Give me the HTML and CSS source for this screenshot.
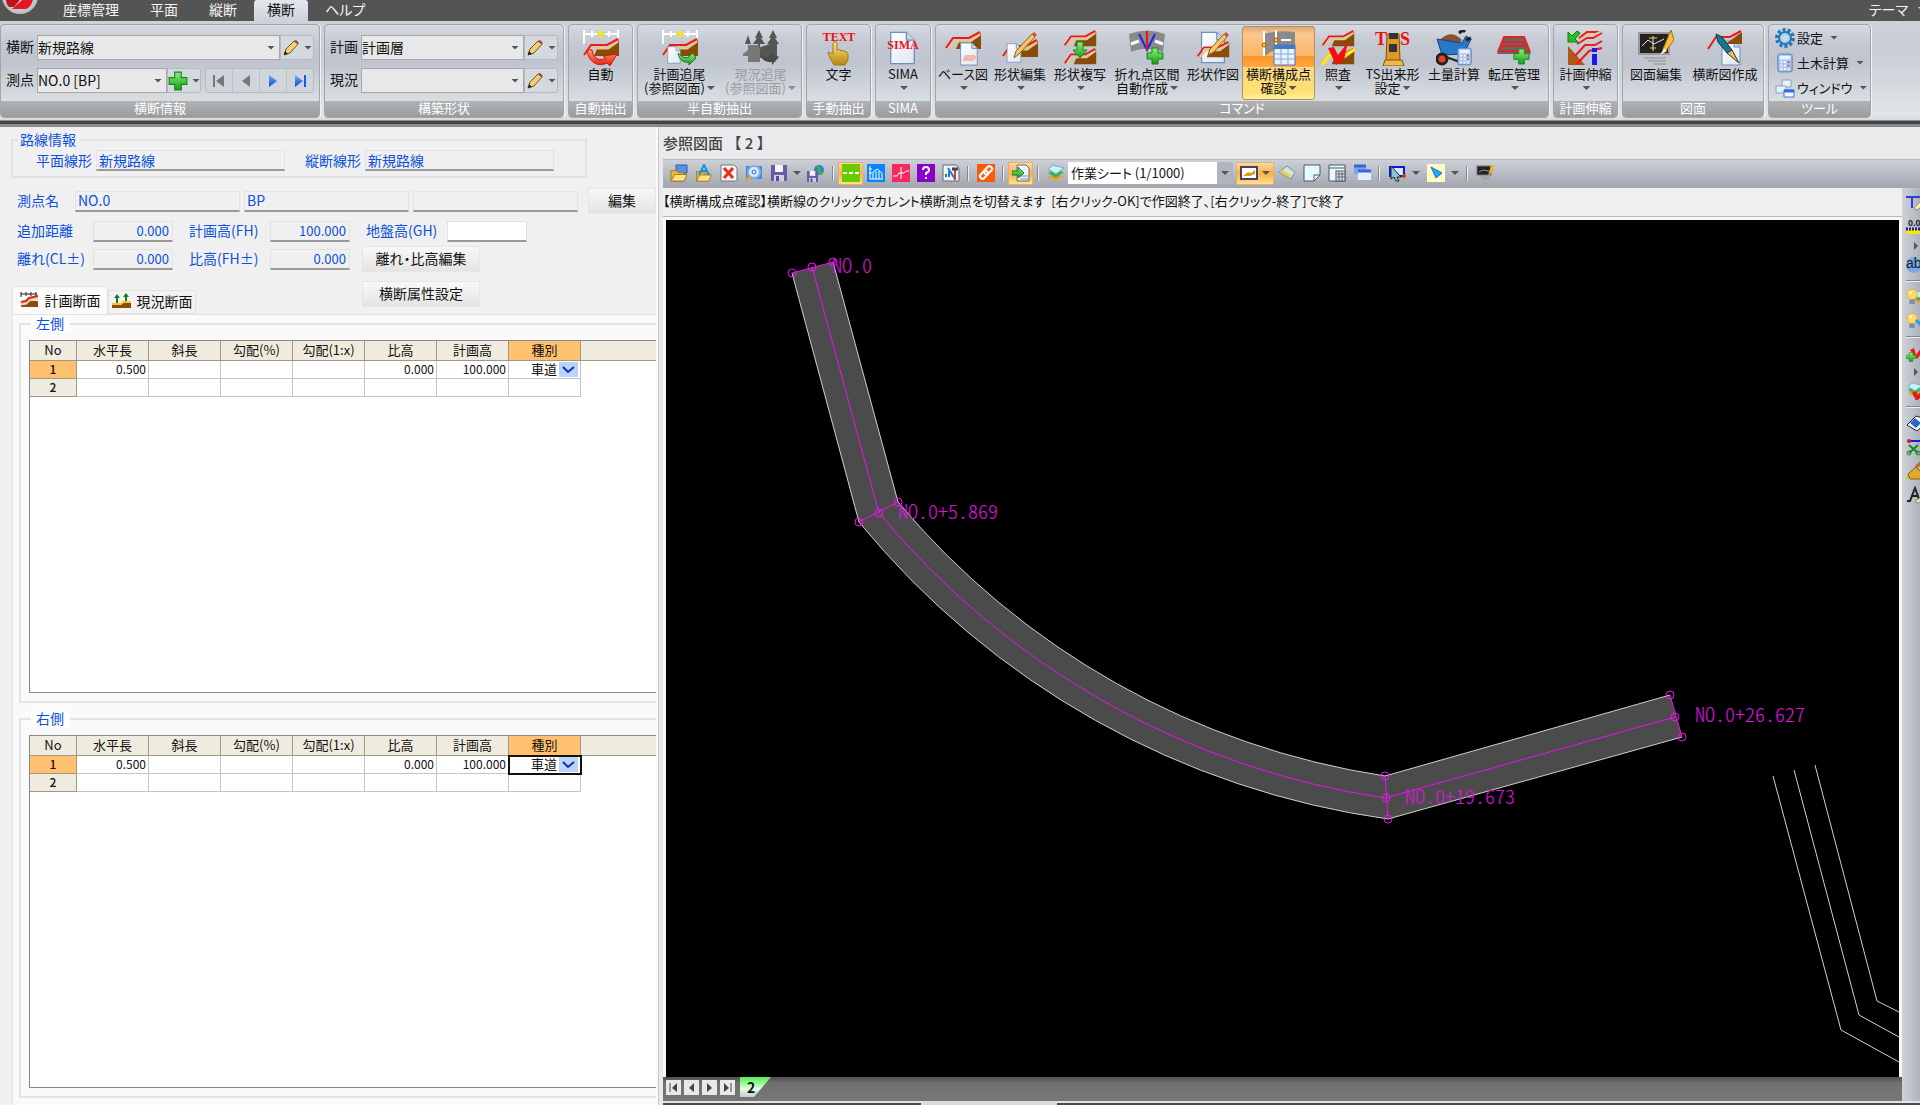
FILE: index.html
```html
<!DOCTYPE html>
<html lang="ja">
<head>
<meta charset="utf-8">
<title>横断 - 参照図面</title>
<link rel="stylesheet" href="styles.css">
</head>
<body>
<svg class="defs" width="0" height="0" aria-hidden="true">
  <defs>
    <linearGradient id="g-red" x1="0" y1="0" x2="0" y2="1"><stop offset="0" stop-color="#ff9a80"/><stop offset="1" stop-color="#e81c08"/></linearGradient>
    <linearGradient id="g-green" x1="0" y1="0" x2="0" y2="1"><stop offset="0" stop-color="#8cf07c"/><stop offset="1" stop-color="#1c9a1c"/></linearGradient>
    <linearGradient id="g-blue" x1="0" y1="0" x2="0" y2="1"><stop offset="0" stop-color="#6fb0ff"/><stop offset="1" stop-color="#0a48d0"/></linearGradient>
    <linearGradient id="g-gold" x1="0" y1="0" x2="0" y2="1"><stop offset="0" stop-color="#ffe98a"/><stop offset="1" stop-color="#b8860b"/></linearGradient>
    <linearGradient id="g-page" x1="0" y1="0" x2="1" y2="1"><stop offset="0" stop-color="#ffffff"/><stop offset="1" stop-color="#dce6f2"/></linearGradient>
    <radialGradient id="g-ball"><stop offset="0" stop-color="#ffffff"/><stop offset="1" stop-color="#b8bcc0"/></radialGradient>
  </defs>
  <symbol id="sec" viewBox="0 0 36 20"><path d="M11 18 14 11H26L36 2V18Z" fill="#8a4a08"/><path d="M3 18 10 10H25L35 3" fill="none" stroke="#ddc99a" stroke-width="3"/><path d="M1 17 8 7H24L35 1" fill="none" stroke="#f01818" stroke-width="2"/></symbol>
  <symbol id="ruler" viewBox="0 0 36 14"><path d="M1 0V14M1 4H35M9 1V7M26 1V7M35 0V8" fill="none" stroke="#fff" stroke-width="2"/><path d="M14 4H22M18 0V8" stroke="#ffe600" stroke-width="2"/></symbol>
  <symbol id="page" viewBox="0 0 20 26"><path d="M1 1H13L19 7V25H1Z" fill="url(#g-page)" stroke="#6f8fb8"/><path d="M13 1V7H19" fill="#c8d8ec" stroke="#6f8fb8"/></symbol>
  <symbol id="plus" viewBox="0 0 18 18"><path d="M6 1H12V6H17V12H12V17H6V12H1V6H6Z" fill="url(#g-green)" stroke="#0f8a1a"/></symbol>
  <symbol id="pencil" viewBox="0 0 18 18"><path d="M2 16 4 10 12 2 16 5 8 14Z" fill="#f3cf72" stroke="#6a5430"/><path d="M12 2 14 1 17 4 16 5Z" fill="#c03028"/><path d="M2 16 3 12 6 15Z" fill="#222"/></symbol>
  <symbol id="calc" viewBox="0 0 18 22"><rect x="1" y="1" width="16" height="20" rx="2" fill="#a8c8f0" stroke="#4a74b0"/><rect x="3" y="3" width="12" height="4" fill="#eaf4ff"/><path d="M4 10H14M4 14H14M4 18H14" stroke="#fff" stroke-width="2" stroke-dasharray="2 2"/><path d="M12 10h2M12 14h2" stroke="#e02020" stroke-width="2"/></symbol>
  <symbol id="swoosh-g" viewBox="0 0 20 14"><path d="M1 2C2 9 7 12 12 11V14L19 7 16 2 13 4 12 6C8 8 5 6 1 2Z" fill="url(#g-green)" stroke="#117a17"/></symbol>
  <symbol id="folder" viewBox="0 0 18 16"><path d="M1 15V4H7L9 6H15V15Z" fill="#e8b840" stroke="#a87818"/><path d="M1 15 5 8H18L15 15Z" fill="#ffe08a" stroke="#a87818"/></symbol>
  <symbol id="floppy" viewBox="0 0 16 16"><path d="M0 0H16V16H0Z" fill="#6a5aa8"/><rect x="4" width="8" height="7" fill="#f4f4fa"/><rect x="3" y="10" width="10" height="6" fill="#d4d0e8"/><rect x="5" y="11" width="3" height="5" fill="#5a4a98"/></symbol>
  <symbol id="layers" viewBox="0 0 18 18"><path d="M1 13 6 9 17 12 9 17Z" fill="#f0a030"/><path d="M1 9 6 6 17 8 9 14Z" fill="#48b048"/><path d="M1 5 6 1 17 4 9 10Z" fill="#c8f0f8" stroke="#68b0c8"/></symbol>
  <symbol id="bulb" viewBox="0 0 16 18"><circle cx="7" cy="6" r="6" fill="#ffd868" stroke="#e0a840"/><circle cx="5" cy="4" r="2" fill="#fff4c8"/><rect x="4" y="12" width="6" height="5" fill="#7890a8"/></symbol>
</svg>

<header class="app-top">
  <nav class="menu">
    <svg class="logo" viewBox="0 0 40 16"><circle cx="20" cy="-4" r="18" fill="url(#g-ball)"/><path d="M6 0H20L14 7H9Q6 4 6 0Z" fill="#c41018"/><path d="M22 0H33Q31 7 26 9H12Z" fill="#e01820"/></svg>
    <a href="#" class="m1">座標管理</a><a href="#">平面</a><a href="#">縦断</a><a href="#" class="on" aria-current="page">横断</a><a href="#">ヘルプ</a>
    <a href="#" class="theme">テーマ<i class="caret"></i></a>
  </nav>

  <div class="ribbon">
    <section class="grp g-info">
      <div class="fields">
        <div class="line">
          <label for="oudan">横断</label>
          <span class="combo wide"><select id="oudan"><option>新規路線</option></select><i class="caret"></i></span>
          <button class="tool" aria-label="横断を編集"><svg width="18" height="18"><use href="#pencil"/></svg><i class="caret"></i></button>
        </div>
        <div class="line">
          <label for="sokuten">測点</label>
          <span class="combo"><select id="sokuten"><option>NO.0 [BP]</option></select><i class="caret"></i></span>
          <button class="tool" aria-label="測点を追加"><svg width="20" height="20"><use href="#plus"/></svg><i class="caret"></i></button>
          <span class="steps">
            <button aria-label="先頭"><svg width="14" height="14"><path d="M2 1V13" stroke="#777" stroke-width="2"/><path d="M12 1V13L4 7Z" fill="#777"/></svg></button>
            <button aria-label="前"><svg width="14" height="14"><path d="M11 1V13L3 7Z" fill="#777"/></svg></button>
            <button aria-label="次"><svg width="14" height="14"><path d="M3 1V13L11 7Z" fill="url(#g-blue)"/></svg></button>
            <button aria-label="末尾"><svg width="14" height="14"><path d="M12 1V13" stroke="#1a5ce0" stroke-width="2"/><path d="M2 1V13L10 7Z" fill="url(#g-blue)"/></svg></button>
          </span>
        </div>
      </div>
      <h2>横断情報</h2>
    </section>

    <section class="grp g-shape">
      <div class="fields">
        <div class="line">
          <label for="keikaku">計画</label>
          <span class="combo wide"><select id="keikaku"><option>計画層</option></select><i class="caret"></i></span>
          <button class="tool" aria-label="計画を編集"><svg width="18" height="18"><use href="#pencil"/></svg><i class="caret"></i></button>
        </div>
        <div class="line">
          <label for="genkyo">現況</label>
          <span class="combo wide"><select id="genkyo"><option></option></select><i class="caret"></i></span>
          <button class="tool" aria-label="現況を編集"><svg width="18" height="18"><use href="#pencil"/></svg><i class="caret"></i></button>
        </div>
      </div>
      <h2>構築形状</h2>
    </section>

    <section class="grp g-auto">
      <div class="items">
        <button class="big"><svg viewBox="0 0 36 36"><use href="#ruler" width="36" height="14"/><use href="#sec" y="8" width="36" height="20"/><path d="M4 20C5 31 14 38 24 33L27 36 34 24 20 26 23 28C16 32 10 28 9 20Z" fill="url(#g-red)" stroke="#d01808"/></svg><span>自動</span></button>
      </div>
      <h2>自動抽出</h2>
    </section>

    <section class="grp g-semi">
      <div class="items">
        <button class="big"><svg viewBox="0 0 36 36"><use href="#ruler" width="36" height="14"/><use href="#sec" y="8" width="36" height="20"/><use href="#page" x="5" y="16" width="14" height="18"/><use href="#swoosh-g" x="15" y="21" width="20" height="14"/></svg><span>計画追尾<br>(参照図面)<i class="caret"></i></span></button>
        <button class="big off" disabled><svg viewBox="0 0 36 36" fill="#555"><path d="M16 0 20 8H18L22 14H17V19H15V14H10L14 8H12ZM30 0 34 8H32L36 14H31V19H29V14H24L28 8H26ZM5 5 8 14H2Z"/><path d="M14 18 34 12V28H14Z"/><path d="M5 15H14L17 18V32H5ZM0 24 5 20V26H0Z" fill="#777"/><path d="M16 22C20 28 24 28 27 26V23L36 27 29 35V32C22 33 18 29 16 22Z" fill="#4a4a4a"/></svg><span>現況追尾<br>(参照図面)<i class="caret"></i></span></button>
      </div>
      <h2>半自動抽出</h2>
    </section>

    <section class="grp g-auto">
      <div class="items">
        <button class="big"><svg viewBox="0 0 36 36"><text x="18" y="11" class="ico-text">TEXT</text><path d="M13 35 8 26 7 22 12 24V13Q14 10 16 13V20Q19 18 20 21 23 19 24 22 27 21 27 25V30L24 35Z" fill="url(#g-gold)" stroke="#a07818"/></svg><span>文字</span></button>
      </div>
      <h2>手動抽出</h2>
    </section>

    <section class="grp g-sima">
      <div class="items">
        <button class="big"><svg viewBox="0 0 36 36"><use href="#page" x="4" y="1" width="27" height="34"/><text x="18" y="19" class="ico-text">SIMA</text></svg><span>SIMA<br><i class="caret"></i></span></button>
      </div>
      <h2>SIMA</h2>
    </section>

    <section class="grp g-cmd">
      <div class="items">
        <button class="big"><svg viewBox="0 0 36 36"><use href="#sec" y="1" width="36" height="20"/><use href="#page" x="14" y="12" width="20" height="24"/><path d="M17 31 20 25H30L32 28 28 31Z" fill="#f0b8b0"/></svg><span>ベース図<br><i class="caret"></i></span></button>
        <button class="big"><svg viewBox="0 0 36 36"><use href="#sec" y="9" width="36" height="20"/><use href="#page" x="4" y="13" width="16" height="20"/><path d="M12 28 14 21 30 4 33 7 17 24Z" fill="#f3c860" stroke="#8a6420"/><path d="M30 4 32 2 35 5 33 7Z" fill="#d84848"/></svg><span>形状編集<br><i class="caret"></i></span></button>
        <button class="big"><svg viewBox="0 0 36 36"><use href="#sec" width="36" height="18"/><use href="#sec" y="18" width="36" height="18"/><path d="M15 12H21V20H25L18 28 11 20H15Z" fill="url(#g-green)" stroke="#129018"/></svg><span>形状複写<br><i class="caret"></i></span></button>
        <button class="big"><svg viewBox="0 0 36 36"><path d="M0 4Q18-3 36 4L34 22Q18 15 2 22Z" fill="#8a8a8a"/><path d="M2 14 10 11M26 11 34 14" stroke="#fff" stroke-width="3"/><path d="M10 4 18 20 26 4" fill="none" stroke="#1c28e8" stroke-width="2"/><path d="M18 1V20" stroke="#e81818" stroke-width="2"/><use href="#plus" x="17" y="17" width="18" height="18"/></svg><span>折れ点区間<br>自動作成<i class="caret"></i></span></button>
        <button class="big"><svg viewBox="0 0 36 36"><use href="#page" x="5" y="1" width="26" height="33"/><use href="#sec" y="11" width="36" height="18"/><path d="M13 25 15 19 29 4 32 7 19 22Z" fill="#f3c860" stroke="#8a6420"/><path d="M29 4 31 2 34 5 32 7Z" fill="#d84848"/></svg><span>形状作図</span></button>
        <button class="big on"><svg viewBox="0 0 36 36"><path d="M2 4Q18 0 34 2V20Q18 14 4 26Z" fill="#8a8a8a"/><path d="M3 1V26M15 0V20" stroke="#fff" stroke-width="2"/><path d="M20 10H30" stroke="#fff" stroke-width="2"/><circle cx="3" cy="15" r="2" fill="#ffe600" stroke="#c03818"/><circle cx="15" cy="10" r="2" fill="#ffe600" stroke="#c03818"/><rect x="13" y="15" width="21" height="20" fill="#e8f2ff" stroke="#4878c0"/><path d="M13 17H34" stroke="#4878c0" stroke-width="4"/><path d="M13 24H34M13 29H34M20 19V35M27 19V35" stroke="#88a8d8"/></svg><span>横断構成点<br>確認<i class="caret"></i></span></button>
        <button class="big"><svg viewBox="0 0 36 36"><use href="#sec" width="36" height="18"/><use href="#sec" y="18" width="36" height="18"/><path d="M2 35 9 25H25L35 19" fill="none" stroke="#ffee00" stroke-width="3"/><path d="M8 18 14 17 18 25 28 12 24 30 16 35Z" fill="#f01010"/></svg><span>照査<br><i class="caret"></i></span></button>
        <button class="big"><svg viewBox="0 0 36 36"><path d="M12 4H24L25 32H11Z" fill="#e09828" stroke="#805010"/><path d="M14 3H23V9H14ZM14 14H22V22H14Z" fill="#333"/><path d="M10 30H27L29 36H8Z" fill="#f0b848" stroke="#805010"/><text x="6" y="15" class="ico-text big-t">T</text><text x="30" y="15" class="ico-text big-t">S</text></svg><span>TS出来形<br>設定<i class="caret"></i></span></button>
        <button class="big"><svg viewBox="0 0 36 36"><path d="M3 11Q14-2 26 10L22 15H5Z" fill="#8a5030"/><path d="M1 9 26 13 30 6 35 9 28 24 6 25Z" fill="#2878c8" stroke="#104880"/><path d="M23 3 27 0 29 2M30 10 35 8" fill="none" stroke="#222" stroke-width="3"/><circle cx="6" cy="29" r="5" fill="#e84020" stroke="#222" stroke-width="3"/><path d="M10 27 24 32" stroke="#222" stroke-width="2"/><use href="#calc" x="21" y="17" width="15" height="19"/></svg><span>土量計算</span></button>
        <button class="big"><svg viewBox="0 0 36 36"><path d="M7 8H28L35 24H1Z" fill="#666"/><path d="M2 22 8 7H28L34 22" fill="none" stroke="#e82020" stroke-width="2"/><path d="M7 12H29M5 16H31M4 21H33" stroke="#e82020" stroke-width="2"/><use href="#plus" x="17" y="18" width="17" height="17"/></svg><span>転圧管理<br><i class="caret"></i></span></button>
      </div>
      <h2>コマンド</h2>
    </section>

    <section class="grp g-auto">
      <div class="items">
        <button class="big"><svg viewBox="0 0 36 36"><path d="M12 8 20 2H35M10 14 20 8H26L35 3" fill="none" stroke="#f01818" stroke-width="2"/><path d="M12 11 20 5H27L35 1" fill="none" stroke="#ddc99a" stroke-width="2"/><path d="M1 16 18 35H1Z" fill="#b05818"/><path d="M10 34 22 21 35 18M8 26 18 15H28L35 11" fill="none" stroke="#f01818" stroke-width="2"/><path d="M1 2V12H11L8 9 13 3 10 1 5 6Z" fill="#20c020" stroke="#107a10"/><path d="M25 24H30V35H25ZM25 18H30V22H25Z" fill="#1818f0"/></svg><span>計画伸縮<br><i class="caret"></i></span></button>
      </div>
      <h2>計画伸縮</h2>
    </section>

    <section class="grp g-draw">
      <div class="items">
        <button class="big"><svg viewBox="0 0 36 36"><rect x="1" y="3" width="30" height="21" fill="#222" stroke="#999" stroke-width="2"/><path d="M4 16 10 10 16 14 26 9M15 6V21" fill="none" stroke="#e8e8e8"/><path d="M11 8H19M12 18H18" stroke="#e8e000"/><path d="M6 28H28M10 31H28M16 34H28" stroke="#aaa" stroke-width="2"/><path d="M33 0 36 10 27 22 25 19Z" fill="#f8c040" stroke="#a06818"/><path d="M26 18 29 21 22 25Z" fill="#fff0c0"/></svg><span>図面編集</span></button>
        <button class="big"><svg viewBox="0 0 36 36"><use href="#page" x="13" y="10" width="22" height="26"/><path d="M18 14H35V2L24 10Z" fill="#8a4a08"/><path d="M1 19 9 7H23L34 1" fill="none" stroke="#f01818" stroke-width="2"/><path d="M9 4 15 7 25 20 20 23 11 12Z" fill="#187890" stroke="#0a3848"/><path d="M20 23 25 20 32 33Z" fill="#e8c060" stroke="#333"/></svg><span>横断図作成</span></button>
      </div>
      <h2>図面</h2>
    </section>

    <section class="grp g-tool">
      <div class="items small">
        <button><svg viewBox="0 0 20 20"><circle cx="10" cy="10" r="8" fill="none" stroke="#2878b8" stroke-width="4" stroke-dasharray="3 2"/><circle cx="10" cy="10" r="6" fill="#9fd8f4" stroke="#2878b8" stroke-width="2"/><circle cx="10" cy="10" r="3" fill="#d4d8dc"/></svg>設定<i class="caret"></i></button>
        <button><svg viewBox="0 0 20 20"><use href="#calc" x="2" width="16" height="20"/></svg>土木計算<i class="caret"></i></button>
        <button><svg viewBox="0 0 20 20"><path d="M7 2H16V9H7Z" fill="#e8f0fa" stroke="#88a0c0"/><path d="M1 8H11V15H1Z" fill="#e8f0fa" stroke="#88a0c0"/><path d="M9 12H19V19H9Z" fill="#f4f8ff" stroke="#4078d0"/><path d="M9 13H19" stroke="#3070e0" stroke-width="3"/></svg>ウィンドウ<i class="caret"></i></button>
      </div>
      <h2>ツール</h2>
    </section>
  </div>
</header>

<main class="work">
  <form class="side">
    <fieldset class="route">
      <legend>路線情報</legend>
      <label for="hei">平面線形</label><input id="hei" readonly value="新規路線">
      <label for="juu">縦断線形</label><input id="juu" readonly value="新規路線">
    </fieldset>

    <div class="names">
      <label for="n1">測点名</label>
      <input id="n1" readonly value="NO.0"><input readonly value="BP" aria-label="測点名 2"><input readonly aria-label="測点名 3">
      <button type="button">編集</button>
    </div>

    <div class="nums">
      <label for="k1">追加距離</label><input id="k1" readonly value="0.000">
      <label for="k2">計画高(FH)</label><input id="k2" readonly value="100.000">
      <label for="k3">地盤高(GH)</label><input id="k3" class="edit">
      <label for="k4">離れ(CL±)</label><input id="k4" readonly value="0.000">
      <label for="k5">比高(FH±)</label><input id="k5" readonly value="0.000">
      <button type="button">離れ・比高編集</button>
    </div>

    <div class="tabrow">
      <div class="tabs" role="tablist">
        <button type="button" role="tab" class="on" aria-selected="true"><svg viewBox="0 0 20 16"><path d="M1 0V5M1 2H17M6 0V4M11 0V4M16 0V4" fill="none" stroke="#222"/><path d="M1 15V12L8 9H18V15Z" fill="#8a4a10"/><path d="M1 12 6 11 9 8 18 6" fill="none" stroke="#e8d8a8" stroke-width="3"/><path d="M1 10 6 9 9 6 18 4" fill="none" stroke="#e02020" stroke-width="2"/></svg>計画断面</button>
        <button type="button" role="tab" aria-selected="false"><svg viewBox="0 0 20 16"><path d="M5 1 8 5H6V11H4V5H2ZM14 0 17 4H15V9H13V4H11Z" fill="#108018"/><path d="M0 11H9L11 10H19V15H0Z" fill="#8a4a10"/><path d="M0 11H9L11 9H19" fill="none" stroke="#f0c838" stroke-width="2"/></svg>現況断面</button>
      </div>
      <button type="button" class="attr">横断属性設定</button>
    </div>

    <div class="page">
      <fieldset class="gridset">
        <legend>左側</legend>
        <div class="sheet">
          <table>
            <colgroup><col class="c-no"><col span="7" class="c"><col></colgroup>
            <thead><tr><th>No</th><th>水平長</th><th>斜長</th><th>勾配(%)</th><th>勾配(1:x)</th><th>比高</th><th>計画高</th><th class="hot">種別</th><th class="rest"></th></tr></thead>
            <tbody>
              <tr><th class="hot">1</th><td>0.500</td><td></td><td></td><td></td><td>0.000</td><td>100.000</td><td class="kind"><span class="pick"><select aria-label="左側 種別"><option>車道</option></select><svg viewBox="0 0 19 15"><path d="M4 5 9 10 15 5" fill="none" stroke="#1030a8" stroke-width="2"/></svg></span></td><td class="rest"></td></tr>
              <tr><th>2</th><td></td><td></td><td></td><td></td><td></td><td></td><td></td><td class="rest"></td></tr>
            </tbody>
          </table>
        </div>
      </fieldset>
      <fieldset class="gridset">
        <legend>右側</legend>
        <div class="sheet">
          <table>
            <colgroup><col class="c-no"><col span="7" class="c"><col></colgroup>
            <thead><tr><th>No</th><th>水平長</th><th>斜長</th><th>勾配(%)</th><th>勾配(1:x)</th><th>比高</th><th>計画高</th><th class="hot">種別</th><th class="rest"></th></tr></thead>
            <tbody>
              <tr><th class="hot">1</th><td>0.500</td><td></td><td></td><td></td><td>0.000</td><td>100.000</td><td class="kind cur"><span class="pick"><select aria-label="右側 種別"><option>車道</option></select><svg viewBox="0 0 19 15"><path d="M4 5 9 10 15 5" fill="none" stroke="#1030a8" stroke-width="2"/></svg></span></td><td class="rest"></td></tr>
              <tr><th>2</th><td></td><td></td><td></td><td></td><td></td><td></td><td></td><td class="rest"></td></tr>
            </tbody>
          </table>
        </div>
      </fieldset>
    </div>
  </form>

  <section class="view">
    <h1>参照図面 【 2 】</h1>
    <div class="bar">
      <button aria-label="開く"><svg viewBox="0 0 18 18"><path d="M6 1H17V9H6Z" fill="#5b8fe0" stroke="#2c5cb0"/><use href="#folder" y="3" width="17" height="15"/></svg></button>
      <button aria-label="文字を開く"><svg viewBox="0 0 18 18"><use href="#folder" y="4" width="17" height="14"/><path d="M4 11 9 1 14 11M6 7H12" fill="none" stroke="#1890d8" stroke-width="2"/></svg></button>
      <button aria-label="閉じる"><svg viewBox="0 0 18 18"><path d="M1 1H14L17 4V17H1Z" fill="#f4f6f8" stroke="#778"/><path d="M4 4 13 14M13 4 4 14" stroke="#e83018" stroke-width="3"/></svg></button>
      <button aria-label="検索"><svg viewBox="0 0 18 18"><rect x="1" y="2" width="16" height="13" fill="#4888e8"/><circle cx="9" cy="8" r="6" fill="#d8ecff" stroke="#88b0d8" stroke-width="2"/><circle cx="9" cy="8" r="2" fill="none" stroke="#3068d0"/><path d="M1 17 5 13" stroke="#e8a820" stroke-width="3"/></svg></button>
      <button aria-label="保存"><svg viewBox="0 0 18 18"><use href="#floppy" x="1" y="1" width="16" height="16"/></svg></button>
      <i class="caret"></i>
      <button aria-label="共有保存"><svg viewBox="0 0 18 18"><circle cx="12" cy="6" r="5" fill="#3878d8"/><path d="M10 2Q14 5 11 8L16 9" fill="none" stroke="#30b848" stroke-width="3"/><use href="#floppy" y="7" width="11" height="11"/></svg></button>
      <i class="sep"></i>
      <button class="on" aria-label="平面"><svg viewBox="0 0 18 18"><rect width="18" height="18" fill="#66cc00"/><path d="M1 9H17" stroke="#fff" stroke-width="2" stroke-dasharray="4 2"/></svg></button>
      <button aria-label="縦断"><svg viewBox="0 0 18 18"><rect width="18" height="18" fill="#0a84ff"/><path d="M3 2V15H16M6 15V8L10 5 15 9V15M9 15V7M12 15V7M2 5H5M2 9H5" fill="none" stroke="#fff"/></svg></button>
      <button aria-label="横断"><svg viewBox="0 0 18 18"><rect width="18" height="18" fill="#f8285a"/><path d="M1 12H5L7 9H12L14 7H17M9 3V15" fill="none" stroke="#fff"/></svg></button>
      <button aria-label="ヘルプ"><svg viewBox="0 0 18 18"><rect width="18" height="18" fill="#8a00c8"/><path d="M6 6Q6 3 9 3T12 6Q12 8 9 9V11M9 13V15" fill="none" stroke="#fff" stroke-width="2"/></svg></button>
      <button aria-label="設定"><svg viewBox="0 0 18 18"><path d="M1 1H14L17 4V17H1Z" fill="#eef2f6" stroke="#667"/><path d="M4 13V10M7 13V7M13 15 6 4" stroke="#2878c8" stroke-width="2"/><path d="M13 6V16" stroke="#c04830" stroke-width="2"/><path d="M10 5H16" stroke="#445" stroke-width="3"/></svg></button>
      <i class="sep"></i>
      <button aria-label="リンク"><svg viewBox="0 0 18 18"><rect width="18" height="18" fill="#fa5a0a"/><rect x="2" y="8" width="9" height="5" rx="2" transform="rotate(-45 7 10)" fill="none" stroke="#fff" stroke-width="2"/><rect x="7" y="4" width="9" height="5" rx="2" transform="rotate(-45 11 7)" fill="none" stroke="#fff" stroke-width="2"/></svg></button>
      <i class="sep"></i>
      <button class="on" aria-label="取込"><svg viewBox="0 0 18 18"><path d="M5 1H14L17 4V17H5Z" fill="#eef4fa" stroke="#667"/><path d="M8 12H16M8 15H16" stroke="#88a"/><path d="M0 7H6V3L12 9 6 14V11H0Z" fill="url(#g-green)" stroke="#188028"/></svg></button>
      <i class="sep"></i>
      <button aria-label="レイヤ"><svg viewBox="0 0 18 18"><use href="#layers" width="18" height="18"/></svg></button>
      <span class="sheet-pick"><select aria-label="シート"><option>作業シート (1/1000)</option></select><i class="caret"></i></span>
      <button class="on pair" aria-label="背景"><svg viewBox="0 0 18 18"><rect x="1" y="3" width="16" height="12" fill="#fff" stroke="#446" stroke-width="2"/><path d="M3 12 8 8 11 9 15 6V10L10 12Z" fill="#d8a010"/></svg><i class="caret"></i></button>
      <button aria-label="消去"><svg viewBox="0 0 18 18"><path d="M1 8 9 2 17 8 13 15Z" fill="#c8e8e0" stroke="#888"/><path d="M3 7 13 13" stroke="#f0d040" stroke-width="3"/></svg></button>
      <button aria-label="シート"><svg viewBox="0 0 18 18"><path d="M1 1H17V11L11 17H1Z" fill="#e4fbfb" stroke="#556"/><path d="M11 17V11H17Z" fill="#fff" stroke="#556"/></svg></button>
      <button aria-label="表"><svg viewBox="0 0 18 18"><path d="M1 1H17V17H1Z" fill="#e4fbfb" stroke="#556"/><path d="M1 4H17" stroke="#556"/><rect x="8" y="7" width="9" height="10" fill="#ddd" stroke="#556"/><path d="M9 10H17M9 13H17M11 8V17M14 8V17" stroke="#667"/></svg></button>
      <button aria-label="重ねて表示"><svg viewBox="0 0 18 18"><rect x="1" y="1" width="12" height="9" fill="#7aa4f0"/><path d="M1 2H13" stroke="#3468d8" stroke-width="3"/><rect x="5" y="6" width="13" height="10" fill="#e4eeff"/><path d="M5 7H18" stroke="#3468d8" stroke-width="3"/></svg></button>
      <i class="sep"></i>
      <button aria-label="選択"><svg viewBox="0 0 18 18"><rect x="2" y="3" width="14" height="9" fill="#d8e8ff" stroke="#0818e8" stroke-width="2"/><path d="M3 2 13 13 9 13 11 17 8 17 6 13 3 15Z" fill="#88c8d8" stroke="#222"/><circle cx="16" cy="12" r="2" fill="#e83018"/></svg></button>
      <i class="caret gap"></i>
      <button aria-label="矢印"><svg viewBox="0 0 18 18"><rect width="18" height="18" fill="#fffcc8"/><path d="M4 3 15 9 9 14Z" fill="#28a8f0" stroke="#1478c0"/></svg></button>
      <i class="caret gap"></i>
      <i class="sep"></i>
      <button aria-label="図面編集"><svg viewBox="0 0 18 18"><rect x="1" y="2" width="14" height="9" fill="#222" stroke="#777"/><path d="M3 8 7 6 13 7M4 13H14M6 15H14" fill="none" stroke="#999"/><path d="M15 1H18V6L12 12Z" fill="#f0b030"/></svg></button>
    </div>

    <div class="stage">
      <div class="doc">
        <p class="msg">【横断構成点確認】横断線のクリックでカレント横断測点を切替えます&nbsp; [右クリック-OK]で作図終了、[右クリック-終了]で終了</p>
        <div class="cad">
          <svg viewBox="666 220 1233 857" preserveAspectRatio="xMinYMin slice" role="img" aria-label="横断図">
            <path d="M792 273 833 262 898 502A790 790 0 0 0 1385 776L1670 695 1682 737 1388 819A832 832 0 0 1 859 522Z" fill="#4b4b4b"/>
            <g fill="none" stroke="#d0d0d0">
              <path d="M833 262 898 502A790 790 0 0 0 1385 776L1670 695"/>
              <path d="M792 273 859 522A832 832 0 0 0 1388 819L1682 737"/>
              <path d="M1773 776 1841 1030 1899 1062M1794 770 1859 1015 1899 1037M1815 765 1877 1001 1899 1012"/>
            </g>
            <g fill="none" stroke="#f010f0">
              <path d="M812 267 879 513A811 811 0 0 0 1385 798L1675 717"/>
              <path d="M792 273 833 262M859 522 898 502M1385 776 1388 819M1670 695 1682 737"/>
              <circle cx="792" cy="273" r="4"/><circle cx="812" cy="267" r="4"/><circle cx="833" cy="262" r="4"/>
              <circle cx="859" cy="522" r="4"/><circle cx="879" cy="513" r="4"/><circle cx="898" cy="502" r="4"/>
              <circle cx="1385" cy="776" r="4"/><circle cx="1386" cy="798" r="4"/><circle cx="1388" cy="819" r="4"/>
              <circle cx="1670" cy="695" r="4"/><circle cx="1675" cy="717" r="4"/><circle cx="1682" cy="737" r="4"/>
            </g>
            <g class="cad-text">
              <text x="832" y="273">NO.0</text><text x="898" y="519">NO.0+5.869</text>
              <text x="1405" y="804">NO.0+19.673</text><text x="1695" y="722">NO.0+26.627</text>
            </g>
          </svg>
        </div>
        <div class="pages">
          <button aria-label="先頭"><svg viewBox="0 0 9 9"><path d="M1 0V9" stroke="#444"/><path d="M8 0V9L3 5Z" fill="#444"/></svg></button>
          <button aria-label="前"><svg viewBox="0 0 9 9"><path d="M7 0V9L2 5Z" fill="#444"/></svg></button>
          <button aria-label="次"><svg viewBox="0 0 9 9"><path d="M2 0V9L7 5Z" fill="#444"/></svg></button>
          <button aria-label="末尾"><svg viewBox="0 0 9 9"><path d="M8 0V9" stroke="#444"/><path d="M1 0V9L6 5Z" fill="#444"/></svg></button>
          <a href="#" class="leaf">2</a>
        </div>
      </div>

      <div class="vbar">
        <button aria-label="寸法"><svg viewBox="0 0 20 18"><path d="M0 3H20M6 3V14" stroke="#3838e0" stroke-width="2"/><path d="M8 14 14 8 18 11 11 16Z" fill="#f8f0a0" stroke="#888"/></svg></button>
        <button aria-label="計測"><svg viewBox="0 0 24 18"><text x="2" y="8" class="v-text">0.00</text><rect x="0" y="10" width="24" height="6" fill="#f8e800"/><path d="M0 11H24" stroke="#1818d0" stroke-width="3" stroke-dasharray="2 1"/></svg></button>
        <i class="side-caret"></i>
        <button aria-label="文字"><svg viewBox="0 0 24 18"><circle cx="8" cy="9" r="8" fill="#78a8e8"/><text x="0" y="12" class="v-abc">abc</text></svg></button>
        <i class="vsep"></i>
        <button aria-label="表示"><svg viewBox="0 0 20 18"><use href="#layers" x="6" width="14" height="18"/><use href="#bulb" width="14" height="18"/></svg></button>
        <button aria-label="表示切替"><svg viewBox="0 0 20 18"><use href="#bulb" width="14" height="18"/><path d="M10 8 18 16" stroke="#2898e0" stroke-width="3"/></svg></button>
        <i class="vsep"></i>
        <button aria-label="点追加"><svg viewBox="0 0 20 18"><path d="M4 6 8 4 10 11 18 0V6L11 15Z" fill="#e81818"/><use href="#plus" y="8" width="10" height="10"/></svg></button>
        <i class="side-caret"></i>
        <button aria-label="レイヤ確認"><svg viewBox="0 0 20 18"><use href="#layers" width="18" height="16"/><path d="M8 10 11 16 20 8" fill="none" stroke="#e01818" stroke-width="4"/></svg></button>
        <i class="vsep"></i>
        <button aria-label="消しゴム"><svg viewBox="0 0 20 18"><path d="M1 11 10 2 20 5V9L11 17Z" fill="#f0f4fa" stroke="#222"/><path d="M4 9 9 4 15 9 10 14Z" fill="#2868c8"/></svg></button>
        <button aria-label="切断"><svg viewBox="0 0 20 18"><path d="M2 3H20" stroke="#1818e0" stroke-width="2"/><circle cx="3" cy="3" r="2" fill="#f01010"/><path d="M3 7 12 15M12 7 3 15" stroke="#188820" stroke-width="2"/><circle cx="3" cy="15" r="2" fill="none" stroke="#188820"/><circle cx="12" cy="15" r="2" fill="none" stroke="#188820"/></svg></button>
        <button aria-label="清掃"><svg viewBox="0 0 20 18"><path d="M0 17H20V14H0Z" fill="#88e050"/><path d="M2 12 10 5 17 12 14 17H4Z" fill="#e0a830" stroke="#906010"/><path d="M10 5 16 0" stroke="#c06820" stroke-width="3"/></svg></button>
        <button aria-label="文字編集"><svg viewBox="0 0 20 18"><path d="M1 15H4L9 2 13 13M5 10H12" fill="none" stroke="#222" stroke-width="2"/><path d="M9 16 16 10 19 13 12 17Z" fill="#f8f0a0" stroke="#888"/></svg></button>
      </div>
    </div>
    <div class="dock"><span></span></div>
  </section>
</main>
</body>
</html>
```

FILE: styles.css
```css
* { box-sizing: border-box; }

body {
  margin: 0;
  min-height: 100vh;
  display: flex;
  flex-direction: column;
  overflow: hidden;
  background: #f0f0f0;
  color: #111;
  font: 14px/20px "Noto Sans CJK JP", sans-serif;
  font-feature-settings: "palt";
}

button, input, select {
  font: inherit;
  font-feature-settings: inherit;
  color: inherit;
  margin: 0;
  padding: 0;
  border: 0;
  border-radius: 0;
  background: none;
}

select { appearance: none; outline: 0; }
h1, h2, p { margin: 0; font-weight: 400; }
fieldset { margin: 0; min-width: 0; }
.defs { flex: none; overflow: hidden; }

.caret {
  flex: none;
  display: inline-block;
  width: 8px;
  height: 4px;
  background: #555;
  clip-path: polygon(0 0, 100% 0, 50% 100%);
}

/* title bar and tabs */
.menu {
  height: 21px;
  display: flex;
  background: #545454;
  overflow: hidden;
}

.menu a {
  color: #f4f4f4;
  text-decoration: none;
  line-height: 18px;
  padding: 0 15px;
}

.menu .m1 { padding-left: 23px; }
.menu a + a { padding-left: 16px; }
.menu .on {
  color: #111;
  background: linear-gradient(#e4e8ee, #cdd2da);
  border-radius: 3px 3px 0 0;
  padding: 0 13px;
  margin: 0 1px 0 2px;
}
.menu .on:nth-of-type(4) { padding-left: 13px; }

.menu .theme {
  display: flex;
  align-items: center;
  gap: 10px;
  height: 18px;
  margin-left: auto;
  margin-right: -6px;
  padding-right: 0;
}
.menu .theme .caret { background: #ddd; }
.logo { width: 40px; height: 16px; }

/* ribbon */
.ribbon {
  display: flex;
  gap: 4px;
  height: 106px;
  padding: 3px 0 9px;
  overflow: hidden;
  background: linear-gradient(#cdd2da 0 3px, #c9cdd6 30px, #dfe5e7 94px, #d8dadd 99px, #444 100px 103px, #8a8a8a 103px);
}

.grp {
  flex: none;
  display: flex;
  flex-direction: column;
  border: 1px solid #a2a6ac;
  border-radius: 4px;
  overflow: hidden;
  background: linear-gradient(#d6dae1, #c3c8d2 20%, #bfc4ce 40%, #e2e9ea);
  box-shadow: 1px 0 0 #eef1f4;
}

.grp h2 {
  margin-top: auto;
  height: 16px;
  line-height: 14px;
  font-size: 13px;
  text-align: center;
  white-space: nowrap;
  color: #fff;
  background: linear-gradient(#b0b2b3, #999b9d);
}

.g-info { width: 320px; }
.g-shape { width: 240px; }
.g-auto { width: 65px; }
.g-semi { width: 165px; }
.g-sima { width: 56px; }
.g-cmd { width: 614px; }
.g-draw { width: 142px; }
.g-tool { width: 103px; }

.fields {
  display: grid;
  gap: 8px;
  padding: 10px 5px 0;
}

.line { display: flex; height: 25px; align-items: stretch; }
.line label { width: 31px; line-height: 23px; white-space: nowrap; }

.combo {
  display: flex;
  align-items: center;
  width: 130px;
  padding-right: 4px;
  border: 1px solid #a8a8a8;
  background: #e8e8e8;
}
.combo.wide { flex: 1; }
.combo select { flex: 1; min-width: 0; height: 100%; padding-bottom: 2px; }

.tool {
  display: flex;
  align-items: center;
  justify-content: center;
  gap: 4px;
  width: 34px;
  border: 1px solid #b4bac2;
  border-radius: 0 3px 3px 0;
  background: #d4d9de;
}

.steps {
  flex: 1;
  display: flex;
  margin-left: 4px;
  border: 1px solid #b4bac2;
  border-radius: 3px;
  background: #d0d5dc;
}
.steps button { flex: 1; display: grid; place-items: center; }
.steps button + button { border-left: 1px solid #bcc2ca; }

.items { display: grid; height: 76px; justify-content: center; }
.g-semi .items { grid-template-columns: 82px 80px; }
.g-cmd .items { grid-template-columns: 54px 60px 60px 74px 58px 73px 46px 63px 60px 60px; justify-content: start; }
.g-draw .items { grid-template-columns: 64px 74px; }

.big {
  display: flex;
  flex-direction: column;
  align-items: center;
  padding-top: 4px;
  margin: 1px 0;
  font-size: 13px;
  line-height: 14px;
  text-align: center;
  white-space: nowrap;
  border-radius: 3px;
}
.big svg { width: 36px; height: 36px; margin-bottom: 1px; flex: none; }
.big .caret { margin-left: 2px; vertical-align: 3px; }
.big.off { color: #9a9da2; }
.big.off .caret { background: #8a8d92; }
.big.on {
  border: 1px solid #b89058;
  padding-top: 3px;
  background: linear-gradient(#d8a878, #fcc890 10%, #fcb468 40%, #fc9428 41%, #ffa840 55%, #f8d888 56%, #ffe070 90%, #fff0a0);
}

.ico-text { font: bold 12px "Liberation Serif", serif; fill: #f01010; text-anchor: middle; }
.big-t { font-size: 18px; }

.items.small { grid-template-rows: repeat(3, 25px); justify-content: start; padding-left: 6px; }
.small button { display: flex; align-items: center; gap: 2px; font-size: 13px; line-height: 20px; white-space: nowrap; }
.small svg { width: 20px; height: 20px; }
.small .caret { margin-left: 5px; }

/* work area */
.work {
  flex: 1;
  min-height: 0;
  display: grid;
  grid-template-columns: minmax(0, 41fr) minmax(0, 79fr);
}

.side {
  display: flex;
  flex-direction: column;
  padding: 3px 0 0 11px;
  overflow: hidden;
  color: #0c50d8;
}

.side label { white-space: nowrap; line-height: 18px; padding-bottom: 2px; }

.side input {
  height: 21px;
  min-width: 0;
  padding: 0 4px 1px 2px;
  border: 1px solid #e2e2e2;
  border-bottom: 2px solid #9a9a9a;
  background: #f0f0f0;
}
.side input.edit { background: #fff; }

.route {
  display: flex;
  align-items: center;
  width: 576px;
  height: 48px;
  padding: 0 0 5px 23px;
  border: 2px solid #e2e2e2;
}
.route legend { margin-left: -18px; padding: 0 4px 0 2px; height: 20px; line-height: 18px; }
.route label { width: 60px; }
.route input { width: 189px; margin-right: 20px; }

.names {
  display: flex;
  align-items: center;
  gap: 4px;
  margin-top: 10px;
  height: 26px;
  padding-left: 6px;
}
.names label { width: 54px; }
.names input { width: 165px; }

.names button, .nums button, .attr {
  height: 26px;
  padding-bottom: 2px;
  color: #111;
  border: 1px solid #e6e6e6;
  background: linear-gradient(#f8f8f8, #e4e4e4);
}
.names button { flex: 1; margin-left: 6px; }

.nums {
  display: grid;
  grid-template-columns: 76px 80px 97px 80px 97px 80px;
  grid-auto-rows: 28px;
  align-items: center;
  margin-top: 3px;
  padding-left: 6px;
}
.nums label:nth-of-type(3n+2), .nums label:nth-of-type(3) { padding-left: 16px; }
.nums input { text-align: right; font-size: 13px; padding-right: 3px; }
.nums button { grid-column: 5 / 7; margin-left: 12px; width: 118px; }

.tabrow {
  display: grid;
  grid-template-columns: 351px 118px;
  align-items: start;
  margin-top: 8px;
  height: 33px;
}

.tabs { display: flex; align-items: flex-end; height: 100%; padding-left: 1px; }
.tabs button {
  display: flex;
  align-items: center;
  justify-content: center;
  gap: 5px;
  width: 88px;
  height: 24px;
  padding-bottom: 2px;
  color: #111;
  border: 1px solid #e2e2e2;
  background: #f2f2f2;
}
.tabs .on { width: 96px; height: 28px; background: #fafafa; border-bottom: 0; }
.tabs svg { width: 20px; height: 16px; }

.page {
  flex: 1;
  min-height: 0;
  display: flex;
  flex-direction: column;
  gap: 8px;
  padding: 1px 0 7px 6px;
  margin-left: 1px;
  border: 1px solid #e2e2e2;
  border-width: 1px 0 0 1px;
  background: #fafafa;
}

.gridset {
  flex: 1;
  min-height: 0;
  display: flex;
  padding: 8px 0 8px 8px;
  border: 2px solid #e4e4e4;
  border-right: 0;
}
.gridset legend { height: 16px; line-height: 14px; margin-left: 2px; padding: 0 6px 0 5px; background: #fff; }

.sheet {
  flex: 1;
  min-width: 0;
  border: 1px solid #888;
  border-right: 0;
  background: #fff;
  overflow: hidden;
}

.sheet table {
  width: 100%;
  table-layout: fixed;
  border-collapse: separate;
  border-spacing: 0;
  color: #111;
}
.c-no { width: 47px; }
.c { width: 72px; }

.sheet th, .sheet td {
  height: 18px;
  padding: 0 2px 2px;
  line-height: 15px;
  font-weight: 400;
  font-size: 13px;
  border: 1px solid #c4c4c4;
  border-width: 0 1px 1px 0;
}
.sheet td { text-align: right; font-size: 12px; }
.sheet th { background: #efecdf; border-color: #9c9a86; }
.sheet thead th { height: 20px; }
.sheet tbody th { font-size: 12px; font-weight: 500; }
.sheet th.hot { background: #ffc070; }
.sheet .rest { border-right: 0; }
.sheet tbody .rest { border-bottom: 0; }
.sheet .kind { padding: 0; }
.sheet .cur { outline: 2px solid #111; outline-offset: -1px; }

.pick { display: grid; align-items: center; height: 17px; }
.pick select, .pick svg { grid-area: 1 / 1; }
.pick select { width: 100%; height: 17px; padding: 0 0 2px 22px; font-size: 13px; line-height: 15px; }
.pick svg { justify-self: end; width: 19px; height: 15px; margin-right: 2px; background: #bcd4fc; pointer-events: none; }

/* drawing window */
.view {
  display: flex;
  flex-direction: column;
  min-height: 0;
  padding-left: 7px;
  background: linear-gradient(90deg, #fafafa 0 2px, #c8c8c8 2px 3px, #e9eaec 3px);
}

.view h1 {
  height: 33px;
  line-height: 31px;
  font-size: 15px;
  font-weight: 500;
  font-feature-settings: normal;
  color: #444;
  border-bottom: 1px solid #b8b8b8;
}

.bar {
  display: flex;
  align-items: center;
  height: 28px;
  padding-left: 3px;
  padding-bottom: 2px;
  background: linear-gradient(#cdd0d6, #a0a5af);
}
.bar button { flex: none; width: 25px; height: 23px; display: flex; align-items: center; justify-content: center; }
.bar svg { width: 18px; height: 18px; flex: none; }
.bar .on { border: 1px solid #e8b060; background: linear-gradient(#f8d8a8, #fcb048 50%, #ffe090); }
.bar .pair { width: 38px; gap: 4px; margin-left: 3px; }
.bar > .caret { margin: 0 2px; }
.bar > .gap { margin: 0 3px; }
.sep { flex: none; width: 2px; height: 15px; margin: 0 4px; background: linear-gradient(90deg, #888 50%, #eee 50%); }

.sheet-pick {
  display: flex;
  align-items: center;
  width: 165px;
  height: 22px;
  padding-right: 4px;
  background: linear-gradient(90deg, #fff 149px, #b0b5be 149px);
}
.sheet-pick select { flex: 1; min-width: 0; height: 22px; padding: 0 0 1px 3px; font-size: 13px; }

.stage { flex: 1; min-height: 0; display: flex; }
.doc { flex: 1; min-width: 0; display: flex; flex-direction: column; }

.msg {
  height: 29px;
  line-height: 26px;
  font-size: 13px;
  white-space: nowrap;
  overflow: hidden;
  background: #f0f0f0;
  border-bottom: 1px solid #b8b8b8;
}

.cad { flex: 1; min-height: 0; padding: 3px 3px 0 3px; background: #f8f8f8; }
.cad svg { display: block; width: 100%; height: 100%; background: #000; }
.cad-text { fill: #e010e0; font-size: 20px; font-weight: 300; font-feature-settings: "hwid"; }

.pages {
  display: flex;
  align-items: center;
  gap: 3px;
  height: 24px;
  padding: 0 0 3px 3px;
  background: linear-gradient(#505050, #707070 25%, #777);
}
.pages button { width: 15px; height: 15px; display: grid; place-items: center; background: #e8e8e8; }
.pages svg { width: 9px; height: 9px; }
.leaf {
  width: 31px;
  height: 20px;
  margin-left: 2px;
  padding-left: 7px;
  align-self: flex-start;
  line-height: 20px;
  font-weight: 700;
  color: #111;
  text-decoration: none;
  background: linear-gradient(#50f050, #e0ffe0 60%, #c8ccd0);
  clip-path: polygon(0 0, 100% 0, 45% 100%, 0 100%);
}

.vbar {
  width: 18px;
  padding: 6px 0 0 4px;
  overflow: hidden;
  display: flex;
  flex-direction: column;
  align-items: flex-start;
  gap: 6px;
  background: linear-gradient(90deg, #cfd2d8, #aeb3bd);
}
.vbar button { flex: none; width: 20px; height: 18px; }
.vbar button svg { display: block; height: 18px; }
.vsep { width: 16px; height: 2px; background: linear-gradient(#888 50%, #eee 50%); }
.side-caret { width: 4px; height: 8px; margin: 0 0 0 8px; background: #555; clip-path: polygon(0 0, 100% 50%, 0 100%); }
.v-text { font: bold 9px "Liberation Sans", sans-serif; fill: #222; }
.v-abc { font: 14px "Liberation Sans", sans-serif; fill: #222; }

.dock { height: 4px; padding-left: 258px; background: linear-gradient(#e4e4e4 50%, #4c4c4c 50%); }
.dock span { display: block; width: 136px; height: 4px; background: #dcdcd4; }
```
